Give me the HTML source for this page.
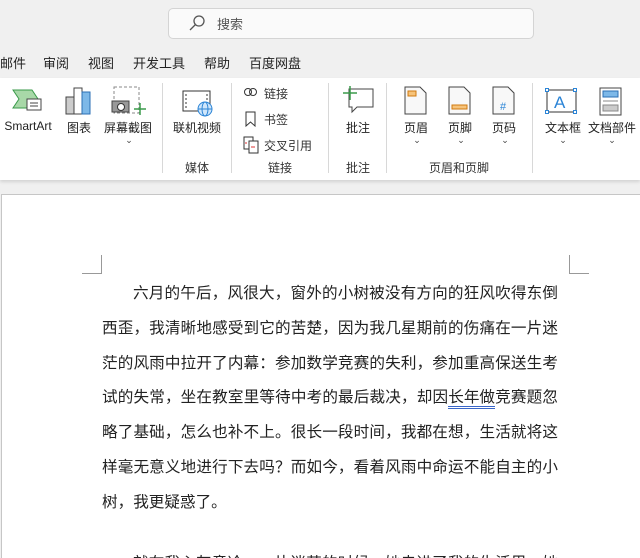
<!DOCTYPE html>
<html style="overflow:hidden;width:640px;height:558px"><head><meta charset="utf-8"><style>
body{margin:0;width:640px;height:558px;overflow:hidden;background:#f0f0f0;font-family:"Liberation Sans","Noto Sans CJK SC",sans-serif;position:relative;color:#333}
.a{position:absolute;white-space:nowrap}
.search{left:168px;top:8px;width:366px;height:31px;background:#fafafa;border:1px solid #d4d4d4;border-radius:5px;box-sizing:border-box}
.tab{top:53px;font-size:13px;color:#222}
.ribbon{left:0;top:78px;width:640px;height:102px;background:#fff;box-shadow:0 2px 3px rgba(0,0,0,.12)}
.sep{top:83px;width:1px;height:90px;background:#d8d8d8}
.lb{font-size:12px;color:#222;transform:translateX(-50%);top:119px}
.gl{font-size:12px;color:#333;transform:translateX(-50%);top:159px}
.chev{font-size:9px;color:#444;transform:translateX(-50%);top:135px}
.page{left:1px;top:194px;width:660px;height:380px;background:#fff;border:1px solid #c6c6c6}
.txt{left:102px;width:456px;font-size:15.6px;color:#222;font-family:"Liberation Sans","Noto Sans CJK SC",sans-serif}
.ln{height:34.8px;line-height:34.8px;text-align:justify;text-align-last:justify;white-space:nowrap}
</style></head><body>
<div class="a search"></div>
<svg class="a" style="left:188px;top:14px" width="18" height="18"><circle cx="11" cy="7" r="5" fill="none" stroke="#555" stroke-width="1.3"/><line x1="7.5" y1="10.5" x2="2" y2="16" stroke="#555" stroke-width="1.3"/></svg>
<div class="a" style="left:217px;top:14px;font-size:13px;color:#555">搜索</div>
<div class="a tab" style="left:0">邮件</div>
<div class="a tab" style="left:43px">审阅</div>
<div class="a tab" style="left:88px">视图</div>
<div class="a tab" style="left:133px">开发工具</div>
<div class="a tab" style="left:204px">帮助</div>
<div class="a tab" style="left:249px">百度网盘</div>
<div class="a ribbon"></div>
<div class="a sep" style="left:162px"></div><div class="a sep" style="left:231px"></div><div class="a sep" style="left:328px"></div><div class="a sep" style="left:386px"></div><div class="a sep" style="left:532px"></div>
<svg class="a" style="left:12px;top:88px" width="32" height="26"><polygon points="1,2 20,2 26,11 20,20 1,20 7,11" fill="#a8d8a8" stroke="#3a9a4a"/><rect x="15" y="11" width="14" height="11" fill="#fff" stroke="#444"/><line x1="18" y1="15" x2="26" y2="15" stroke="#444"/><line x1="18" y1="18" x2="26" y2="18" stroke="#444"/></svg>
<svg class="a" style="left:65px;top:86px" width="28" height="30"><rect x="1" y="11" width="8" height="17" fill="#ccc" stroke="#444"/><rect x="9" y="2" width="8" height="26" fill="#fff" stroke="#444"/><rect x="17" y="6" width="8" height="22" fill="#7db8e8" stroke="#2b6fb5"/></svg>
<svg class="a" style="left:111px;top:86px" width="36" height="30"><rect x="3" y="1" width="25" height="26" fill="none" stroke="#888" stroke-dasharray="3,2"/><rect x="1" y="15" width="17" height="11" fill="#999" stroke="#444"/><circle cx="10" cy="21" r="3.5" fill="#fff" stroke="#333"/><line x1="29" y1="17" x2="29" y2="29" stroke="#3a9a4a" stroke-width="1.5"/><line x1="23" y1="23" x2="35" y2="23" stroke="#3a9a4a" stroke-width="1.5"/></svg>
<svg class="a" style="left:182px;top:89px" width="32" height="28"><rect x="1" y="2" width="27" height="20" fill="#fff" stroke="#333"/><line x1="4" y1="5" x2="4" y2="19" stroke="#333" stroke-dasharray="2,2"/><line x1="25" y1="5" x2="25" y2="12" stroke="#333" stroke-dasharray="2,2"/><circle cx="23" cy="20" r="7" fill="#cfe6fb" stroke="#2b84d6"/><line x1="16" y1="20" x2="30" y2="20" stroke="#2b84d6"/><ellipse cx="23" cy="20" rx="3" ry="7" fill="none" stroke="#2b84d6"/></svg>
<svg class="a" style="left:243px;top:86px" width="16" height="12"><circle cx="5" cy="6" r="3.5" fill="none" stroke="#333"/><circle cx="10" cy="6" r="3.5" fill="none" stroke="#333"/></svg>
<div class="a" style="left:264px;top:85px;font-size:12px">链接</div>
<svg class="a" style="left:245px;top:111px" width="12" height="17"><path d="M1 1H10V15L5.5 11L1 15Z" fill="none" stroke="#333"/></svg>
<div class="a" style="left:264px;top:111px;font-size:12px">书签</div>
<svg class="a" style="left:243px;top:136px" width="17" height="18"><rect x="1" y="1" width="9" height="12" fill="#fff" stroke="#333"/><rect x="6" y="5" width="9" height="12" fill="#fff" stroke="#333"/><line x1="8" y1="11" x2="12" y2="11" stroke="#d33"/><line x1="2" y1="7" x2="4" y2="7" stroke="#d33"/></svg>
<div class="a" style="left:264px;top:137px;font-size:12px">交叉引用</div>
<svg class="a" style="left:342px;top:85px" width="32" height="30"><path d="M7 4H31V22H15L10 27V22H7Z" fill="#fff" stroke="#444"/><line x1="8" y1="1" x2="8" y2="15" stroke="#3a9a4a" stroke-width="1.5"/><line x1="1" y1="8" x2="15" y2="8" stroke="#3a9a4a" stroke-width="1.5"/></svg>
<svg class="a" style="left:404px;top:86px" width="24" height="30"><path d="M1 1H16L22 7V28H1Z" fill="#f8f8f8" stroke="#444"/><rect x="4" y="5" width="8" height="5" fill="#f6c37a" stroke="#d07a10"/></svg>
<svg class="a" style="left:448px;top:86px" width="24" height="30"><path d="M1 1H16L22 7V28H1Z" fill="#f8f8f8" stroke="#444"/><rect x="4" y="19" width="15" height="4" fill="#f6c37a" stroke="#d07a10"/></svg>
<svg class="a" style="left:492px;top:86px" width="24" height="30"><path d="M1 1H16L22 7V28H1Z" fill="#f8f8f8" stroke="#444"/><text x="8" y="24" font-size="11" fill="#2b84d6" font-family="Liberation Sans">#</text></svg>
<svg class="a" style="left:545px;top:88px" width="32" height="26"><rect x="2" y="2" width="29" height="22" fill="#fff" stroke="#333"/><rect x="0.5" y="0.5" width="3" height="3" fill="#fff" stroke="#2b84d6"/><rect x="28.5" y="0.5" width="3" height="3" fill="#fff" stroke="#2b84d6"/><rect x="0.5" y="22.5" width="3" height="3" fill="#fff" stroke="#2b84d6"/><rect x="28.5" y="22.5" width="3" height="3" fill="#fff" stroke="#2b84d6"/><text x="9" y="20" font-size="17" fill="#2b84d6" font-family="Liberation Sans">A</text></svg>
<svg class="a" style="left:599px;top:87px" width="24" height="30"><rect x="1" y="1" width="21" height="27" fill="#fff" stroke="#444"/><rect x="4" y="4" width="15" height="6" fill="#7db8e8" stroke="#2b6fb5"/><line x1="4" y1="14" x2="19" y2="14" stroke="#888"/><rect x="4" y="18" width="15" height="6" fill="#ccc" stroke="#888"/></svg>
<div class="a lb" style="left:28px">SmartArt</div>
<div class="a lb" style="left:79px">图表</div>
<div class="a lb" style="left:128px">屏幕截图</div>
<div class="a chev" style="left:129px">⌄</div>
<div class="a lb" style="left:197px">联机视频</div>
<div class="a lb" style="left:358px">批注</div>
<div class="a lb" style="left:416px">页眉</div><div class="a chev" style="left:417px">⌄</div>
<div class="a lb" style="left:460px">页脚</div><div class="a chev" style="left:461px">⌄</div>
<div class="a lb" style="left:504px">页码</div><div class="a chev" style="left:505px">⌄</div>
<div class="a lb" style="left:563px">文本框</div><div class="a chev" style="left:563px">⌄</div>
<div class="a lb" style="left:612px">文档部件</div><div class="a chev" style="left:612px">⌄</div>
<div class="a gl" style="left:197px">媒体</div>
<div class="a gl" style="left:280px">链接</div>
<div class="a gl" style="left:358px">批注</div>
<div class="a gl" style="left:459px">页眉和页脚</div>
<div class="a page"></div>
<div class="a" style="left:82px;top:255px;width:19px;height:18px;border-right:1px solid #999;border-bottom:1px solid #999"></div>
<div class="a" style="left:569px;top:255px;width:19px;height:18px;border-left:1px solid #999;border-bottom:1px solid #999"></div>
<div class="a txt" style="top:277px">
<div class="ln" style="padding-left:31px">六月的午后，风很大，窗外的小树被没有方向的狂风吹得东倒</div>
<div class="ln">西歪，我清晰地感受到它的苦楚，因为我几星期前的伤痛在一片迷</div>
<div class="ln">茫的风雨中拉开了内幕：参加数学竞赛的失利，参加重高保送生考</div>
<div class="ln">试的失常，坐在教室里等待中考的最后裁决，却因<span style="border-bottom:3px double #3a66c8;line-height:16px;display:inline-block">长年做</span>竞赛题忽</div>
<div class="ln">略了基础，怎么也补不上。很长一段时间，我都在想，生活就将这</div>
<div class="ln">样毫无意义地进行下去吗？而如今，看着风雨中命运不能自主的小</div>
<div class="ln" style="text-align-last:left">树，我更疑惑了。</div>
<div class="ln" style="margin-top:26px;padding-left:31px">就在我心灰意冷，一片迷茫的时候，她走进了我的生活里。她</div>
</div>
</body></html>
